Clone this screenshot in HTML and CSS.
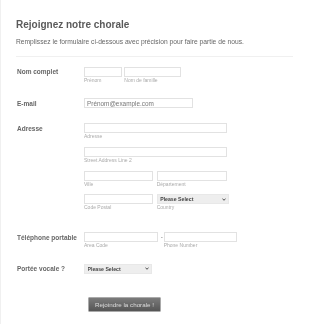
FILE: index.html
```html
<!DOCTYPE html>
<html lang="fr">
<head>
    <meta charset="UTF-8">
    <meta name="viewport" content="width=device-width, initial-scale=1.0">
    <title>Rejoignez notre chorale</title>
    <link rel="stylesheet" href="styles.css">
</head>
<body>
    <div class="page">
        <div class="header">
            <h1 class="title">Rejoignez notre chorale</h1>
            <p class="subtitle">Remplissez le formulaire ci-dessous avec précision pour faire partie de nous.</p>
        </div>

        <form class="form">
            <div class="row">
                <label class="label">Nom complet</label>
                <div class="fields">
                    <div class="line">
                        <div class="field w-first"><input type="text"><span class="sub">Prénom</span></div>
                        <div class="field w-last"><input type="text"><span class="sub">Nom de famille</span></div>
                    </div>
                </div>
            </div>

            <div class="row">
                <label class="label">E-mail</label>
                <div class="fields">
                    <div class="field w-email"><input type="email" placeholder="Prénom@example.com"></div>
                </div>
            </div>

            <div class="row address">
                <label class="label">Adresse</label>
                <div class="fields">
                    <div class="line">
                        <div class="field w-full"><input type="text"><span class="sub">Adresse</span></div>
                    </div>
                    <div class="line">
                        <div class="field w-full"><input type="text"><span class="sub">Street Address Line 2</span></div>
                    </div>
                    <div class="line">
                        <div class="field w-half"><input type="text"><span class="sub">Ville</span></div>
                        <div class="field w-half2"><input type="text"><span class="sub">Département</span></div>
                    </div>
                    <div class="line">
                        <div class="field w-half"><input type="text"><span class="sub">Code Postal</span></div>
                        <div class="field w-country">
                            <div class="select-wrap">
                                <select><option>Please Select</option></select>
                                <svg class="chevron" viewBox="0 0 8 6"><path d="M1 1.2 L4 4.6 L7 1.2" fill="none" stroke="#444" stroke-width="1.8"/></svg>
                            </div>
                            <span class="sub">Country</span>
                        </div>
                    </div>
                </div>
            </div>

            <div class="row">
                <label class="label">Téléphone portable</label>
                <div class="fields">
                    <div class="line">
                        <div class="field w-phone"><input type="text"><span class="sub">Area Code</span></div>
                        <span class="dash">-</span>
                        <div class="field w-phone"><input type="text"><span class="sub">Phone Number</span></div>
                    </div>
                </div>
            </div>

            <div class="row">
                <label class="label">Portée vocale ?</label>
                <div class="fields">
                    <div class="field w-voice">
                        <div class="select-wrap">
                            <select><option>Please Select</option></select>
                            <svg class="chevron" viewBox="0 0 8 6"><path d="M1 1.2 L4 4.6 L7 1.2" fill="none" stroke="#444" stroke-width="1.8"/></svg>
                        </div>
                    </div>
                </div>
            </div>

            <div class="actions">
                <button type="button" class="submit">Rejoindre la chorale !</button>
            </div>
        </form>
    </div>
</body>
</html>
```

FILE: styles.css
```css
body {
    margin: 0;
    font-family: "Liberation Sans", Arial, Helvetica, sans-serif;
    color: #555;
    background-color: #fff;
}

.page {
    min-height: 324px;
    box-sizing: border-box;
    border-left: 1px solid #f0f0f0;
    padding-top: 19.2px;
    will-change: transform; /* grayscale text smoothing */
}

/* Header */
.header {
    margin: 0 17px 0 15px;
    padding-bottom: 9.7px;
    border-bottom: 1px solid #f0f0f0;
}

.title {
    margin: 0;
    font-size: 10px;
    line-height: 12px;
    font-weight: bold;
    color: #5a5a5a;
}

.subtitle {
    margin: 7.1px 0 0 0;
    font-size: 6.7px;
    line-height: 8px;
    color: #666;
}

/* Form rows */
.form {
    padding: 9.7px 0 0 16px;
}

.row {
    display: flex;
    margin-bottom: 14.8px;
}

.row.address {
    margin-bottom: 14px;
}

.label {
    width: 67px;
    flex-shrink: 0;
    padding-top: 1.5px;
    font-size: 6.5px;
    line-height: 8px;
    font-weight: bold;
    color: #666;
}

.fields {
    display: flex;
    flex-direction: column;
}

.line {
    display: flex;
    gap: 3.4px;
}

.address .line {
    margin-bottom: 6.7px;
}

.field {
    display: flex;
    flex-direction: column;
}

.field input,
.field select {
    display: block;
    box-sizing: border-box;
    width: 100%;
    height: 10px;
    margin: 0;
    border: 1px solid #e2e2e2;
    border-radius: 0;
    padding: 0 2px;
    font-family: inherit;
    font-size: 6.4px;
    color: #555;
    background-color: #fff;
    outline: none;
}

.field input::placeholder {
    color: #777;
}

.sub {
    font-size: 5px;
    line-height: 7px;
    color: #aaa;
    white-space: nowrap;
}

/* Field widths */
.w-first { width: 38.3px; }
.w-last { width: 56.7px; margin-left: -1.4px; }
.w-email { width: 109px; }
.w-full { width: 142.7px; }
.w-half { width: 69.3px; }
.w-half2 { width: 70px; }
.w-country { width: 72.6px; }
.w-phone { width: 73.7px; }
.w-voice { width: 68px; }

.dash {
    width: 0;
    margin: 0 -0.4px;
    font-size: 6.4px;
    line-height: 10px;
    color: #777;
}

/* Selects */
.select-wrap {
    position: relative;
    height: 10px;
}

.field select {
    appearance: none;
    -webkit-appearance: none;
    background-color: #eee;
    border-color: #e8e8e8;
    font-size: 5.2px;
    font-weight: bold;
    color: #444;
    padding-left: 2.5px;
}

.chevron {
    position: absolute;
    right: 3px;
    top: 3.5px;
    width: 4px;
    height: 3px;
    pointer-events: none;
}

/* Submit */
.actions {
    padding: 4.5px 0 0 70.7px;
}

.submit {
    box-sizing: border-box;
    width: 73.6px;
    height: 15.7px;
    padding: 0;
    border: 1px solid #aaa;
    border-radius: 1px;
    background: linear-gradient(#7b7b7b, #555);
    color: #ddd;
    font-family: inherit;
    font-size: 6.25px;
    cursor: pointer;
}

.submit:hover {
    background: linear-gradient(#888, #5a5a5a);
}
```
